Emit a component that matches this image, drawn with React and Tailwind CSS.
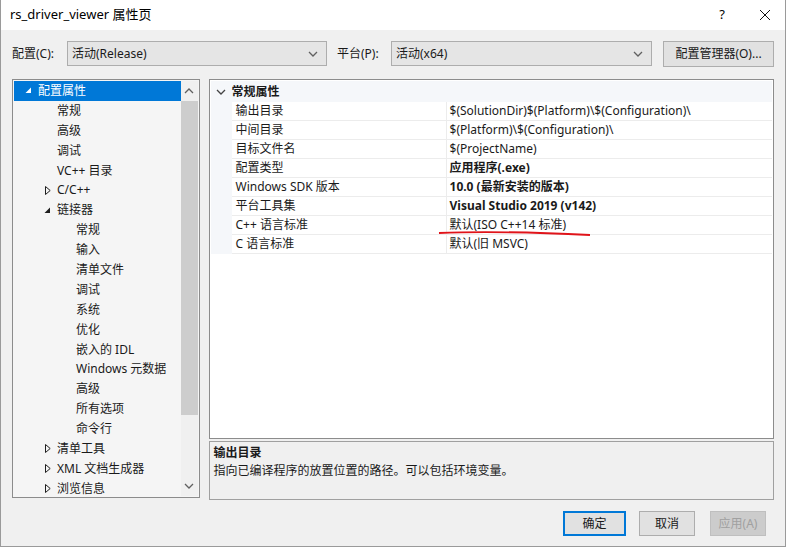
import React from 'react'

const font = { fontFamily: '"Noto Sans", "Noto Sans CJK SC", sans-serif' }

const treeData = [
  { label: '配置属性', level: 0, arrow: 'open', selected: true },
  { label: '常规', level: 1 },
  { label: '高级', level: 1 },
  { label: '调试', level: 1 },
  { label: 'VC++ 目录', level: 1 },
  { label: 'C/C++', level: 1, arrow: 'closed' },
  { label: '链接器', level: 1, arrow: 'open' },
  { label: '常规', level: 2 },
  { label: '输入', level: 2 },
  { label: '清单文件', level: 2 },
  { label: '调试', level: 2 },
  { label: '系统', level: 2 },
  { label: '优化', level: 2 },
  { label: '嵌入的 IDL', level: 2 },
  { label: 'Windows 元数据', level: 2 },
  { label: '高级', level: 2 },
  { label: '所有选项', level: 2 },
  { label: '命令行', level: 2 },
  { label: '清单工具', level: 1, arrow: 'closed' },
  { label: 'XML 文档生成器', level: 1, arrow: 'closed' },
  { label: '浏览信息', level: 1, arrow: 'closed' },
]

const props = [
  { name: '输出目录', value: '$(SolutionDir)$(Platform)\\$(Configuration)\\' },
  { name: '中间目录', value: '$(Platform)\\$(Configuration)\\' },
  { name: '目标文件名', value: '$(ProjectName)' },
  { name: '配置类型', value: '应用程序(.exe)', bold: true },
  { name: 'Windows SDK 版本', value: '10.0 (最新安装的版本)', bold: true },
  { name: '平台工具集', value: 'Visual Studio 2019 (v142)', bold: true },
  { name: 'C++ 语言标准', value: '默认(ISO C++14 标准)' },
  { name: 'C 语言标准', value: '默认(旧 MSVC)' },
]

const Chevron = ({ up, className }) => (
  <svg width="10" height="6" viewBox="0 0 10 6" className={className}>
    <path d={up ? 'M1 5 L5 1 L9 5' : 'M1 1 L5 5 L9 1'} fill="none" stroke="currentColor" strokeWidth="1.3" />
  </svg>
)

const Arrow = ({ type, white }) => {
  if (type === 'open')
    return (
      <svg width="7" height="7" viewBox="0 0 7 7">
        <polygon points="6,0.5 6,6 0.5,6" fill={white ? '#ffffff' : '#1e1e1e'} />
      </svg>
    )
  return (
    <svg width="6" height="9" viewBox="0 0 6 9">
      <polygon points="0.5,0.5 5.2,4.5 0.5,8.5" fill="none" stroke="#1e1e1e" strokeWidth="1" />
    </svg>
  )
}

const Combo = ({ text, w }) => (
  <div className={`${w} h-[25px] bg-[#e5e5e5] border border-[#adadad] flex items-center justify-between pl-[4px] pr-[8px]`}>
    <span>{text}</span>
    <Chevron className="text-[#606060]" />
  </div>
)

const App = () => {
  return (
    <div style={font} className="w-[786px] h-[547px] bg-[#f0f0f0] border-x border-b border-[#9a9a9a] text-[12px] text-[#1a1a1a] flex flex-col">
      {/* title bar */}
      <div className="h-[30px] bg-white flex items-center justify-between pl-[9px] pr-[14px] shrink-0">
        <span className="text-[13px] text-black">rs_driver_viewer 属性页</span>
        <div className="flex items-center gap-[34px]">
          <span className="text-[13px] text-black">?</span>
          <svg width="12" height="12" viewBox="0 0 12 12">
            <path d="M1 1 L11 11 M11 1 L1 11" stroke="#111" strokeWidth="1" />
          </svg>
        </div>
      </div>

      <div className="px-[11px] flex flex-col">
        {/* config row */}
        <div className="mt-[11px] h-[25px] flex items-center">
          <span className="w-[55px]">配置(C):</span>
          <Combo text="活动(Release)" w="w-[260px]" />
          <span className="ml-[10px] w-[54px]">平台(P):</span>
          <Combo text="活动(x64)" w="w-[261px]" />
          <div className="ml-[11px] w-[111px] h-[26px] bg-[#e1e1e1] border border-[#adadad] flex items-center justify-center">
            配置管理器(O)...
          </div>
        </div>

        {/* main */}
        <div className="mt-[13px] flex gap-[9px]">
          {/* tree */}
          <div className="w-[188px] h-[419px] border border-[#8c8c8c] bg-[#f5f5f5] flex p-[1px]">
            <div className="flex-1 flex flex-col overflow-hidden">
              {treeData.map((t, i) => (
                <div
                  key={i}
                  className={`h-[19.9px] shrink-0 flex items-center ${t.selected ? 'bg-[#0078d7] text-white' : ''}`}
                >
                  <div className={`${t.level === 0 ? 'w-[24px]' : t.level === 1 ? 'w-[43px]' : 'w-[62px]'} shrink-0 flex justify-end pr-[6px]`}>
                    {t.arrow && <Arrow type={t.arrow} white={t.selected} />}
                  </div>
                  <span className="whitespace-nowrap">{t.label}</span>
                </div>
              ))}
            </div>
            {/* scrollbar */}
            <div className="w-[17px] bg-[#f0f0f0] flex flex-col">
              <div className="h-[20px] flex items-center justify-center text-[#606060]">
                <Chevron up />
              </div>
              <div className="h-[314px] bg-[#cdcdcd]" />
              <div className="flex-1" />
              <div className="h-[20px] flex items-center justify-center text-[#606060]">
                <Chevron />
              </div>
            </div>
          </div>

          {/* right column */}
          <div className="w-[567px] flex flex-col gap-[2px]">
            <div className="relative h-[360px] border border-[#8c8c8c] bg-white p-[1px]">
              <div className="h-[21px] bg-[#f5f7fa] flex items-center">
                <div className="w-[21px] flex justify-center text-[#444]">
                  <Chevron />
                </div>
                <span className="font-semibold">常规属性</span>
              </div>
              <div className="flex">
                <div className="w-[21px] bg-[#f5f7fa]" />
                <div className="flex-1 flex flex-col">
                  {props.map((p, i) => (
                    <div key={i} className="h-[19px] flex border-b border-[#ececec]">
                      <div className="w-[215px] pl-[4px] flex items-center border-r border-[#ececec] whitespace-nowrap">{p.name}</div>
                      <div className={`flex-1 pl-[3px] flex items-center whitespace-nowrap ${p.bold ? 'font-bold' : ''}`}>{p.value}</div>
                    </div>
                  ))}
                </div>
              </div>
              <svg className="absolute left-[228px] top-[150px]" width="154" height="8" viewBox="0 0 154 8">
                <path d="M1 3 Q 60 0.5 152 5" fill="none" stroke="#e0141a" strokeWidth="1.8" />
              </svg>
            </div>
            <div className="h-[59px] border border-[#a0a0a0] bg-[#f0f0f0] px-[4px] pt-[2px] flex flex-col">
              <span className="font-bold leading-[18px]">输出目录</span>
              <span className="leading-[18px]">指向已编译程序的放置位置的路径。可以包括环境变量。</span>
            </div>
          </div>
        </div>

        {/* buttons */}
        <div className="mt-[11px] flex justify-end pr-[8px]">
          <div className="w-[63px] h-[25px] bg-[#e1e1e1] border-2 border-[#0078d7] flex items-center justify-center">确定</div>
          <div className="ml-[13px] w-[56px] h-[25px] bg-[#e1e1e1] border border-[#adadad] flex items-center justify-center">取消</div>
          <div className="ml-[15px] w-[56px] h-[25px] bg-[#cccccc] border border-[#bfbfbf] text-[#a0a0a0] flex items-center justify-center">应用(A)</div>
        </div>
      </div>
    </div>
  )
}

export default App
